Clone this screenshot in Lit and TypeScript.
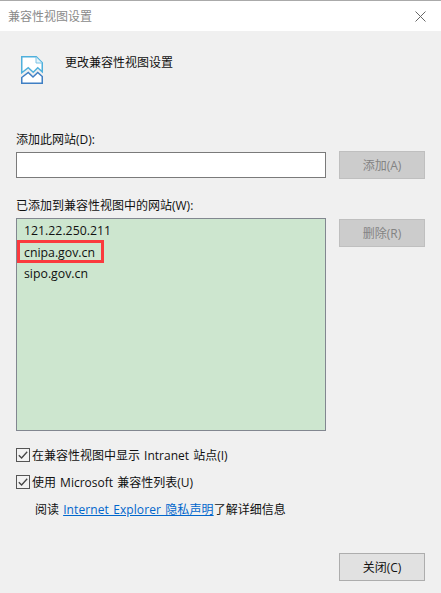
import { LitElement, html, css } from "lit";
import { customElement } from "lit/decorators.js";

const check = html`<svg class="cb" width="14" height="14" viewBox="0 0 14 14"><rect x=".5" y=".5" width="13" height="13" fill="#fff" fill-opacity=".15" stroke="#555"/><path d="M2.8 7.2 5.6 10l5.6-6.2" fill="none" stroke="#444" stroke-width="1.3"/></svg>`;

@customElement("app-root")
export class AppRoot extends LitElement {
  static styles = css`
    :host { display: block; width: 441px; height: 593px; background: #f0f0f0; color: #111;
      font: 12px "Open Sans", "Noto Sans CJK SC", sans-serif; overflow: hidden; }
    .title { height: 30px; background: #fff; border-top: 1px solid #aaa; display: flex; align-items: center; justify-content: space-between; padding: 0 15px 0 8px; color: #8a8a8a; }
    .title svg { display: block; }
    .head { display: flex; align-items: flex-start; gap: 22px; height: 53px; padding: 25px 0 0 21px; box-sizing: content-box; }
    .head span { margin-top: -2px; line-height: 18px; }
    .head svg { flex: none; }
    .body { padding: 0 16px; display: grid; grid-template-columns: 310px 86px; column-gap: 13px; }
    .label { grid-column: 1 / 3; height: 18px; line-height: 18px; }
    .l1 { margin-top: 22px; margin-bottom: 2px; }
    .l2 { margin-top: 18px; margin-bottom: 3px; }
    .input { height: 26px; box-sizing: border-box; background: #fff; border: 1px solid #7a7a7a; margin-top: 1px; }
    .btn { height: 28px; box-sizing: border-box; display: flex; align-items: center; justify-content: center; }
    .off { background: #ccc; border: 1px solid #bfbfbf; color: #838383; }
    .on { background: #e1e1e1; border: 1px solid #adadad; color: #111; }
    .list { position: relative; height: 213px; box-sizing: border-box; background: #cde6cf; border: 1px solid #828790; padding: 0 0 0 7px; }
    .list div { height: 21.5px; line-height: 21.5px; font-size: 12.3px; }
    .list div:first-child { margin-top: 1px; }
    .del { margin-top: 1px; }
    .mark { position: absolute; left: 0; top: 21px; width: 87px; height: 23px; box-sizing: border-box; border: 3px solid #fb3a3e; }
    .checks { padding: 0 16px; margin-top: 15px; word-spacing: 1px; }
    .row { display: flex; align-items: center; gap: 2px; height: 18px; margin-bottom: 9px; }
    .cb { flex: none; }
    .info { padding-left: 19px; height: 18px; line-height: 18px; margin-top: 10px; }
    a { color: #0066cc; text-decoration: underline; letter-spacing: .1px; }
    .foot { padding: 0 16px; display: flex; justify-content: flex-end; margin-top: 34px; }
    .foot .btn { width: 86px; }
  `;
  render() {
    return html`
      <div class="title"><span>兼容性视图设置</span>
        <svg width="11" height="11" viewBox="0 0 11 11"><path d="M.5.5l10 10M10.5.5l-10 10" stroke="#666" fill="none"/></svg></div>
      <div class="head">
        <svg width="22" height="28" viewBox="0 0 22 28">
          <path d="M.75.75h14.5l6 6v9l-4.5-4-4.5 4.5-5-4.5-6.5 5z" fill="#fff" stroke="#4fb0dc" stroke-width="1.5"/>
          <path d="M15 1v6h6" fill="#e4f3fa" stroke="#7cc4e6"/>
          <path d="M.75 21.5l6.5-5 4.75 4.5 4.75-4.5 4.5 4v6.75H.75z" fill="#fff" stroke="#3f7fc4" stroke-width="1.5"/>
        </svg>
        <span>更改兼容性视图设置</span>
      </div>
      <div class="body">
        <div class="label l1">添加此网站(D):</div>
        <div class="input"></div>
        <div class="btn off">添加(A)</div>
        <div class="label l2">已添加到兼容性视图中的网站(W):</div>
        <div class="list">
          <div>121.22.250.211</div><div>cnipa.gov.cn</div><div>sipo.gov.cn</div>
          <span class="mark"></span>
        </div>
        <div class="btn off del">删除(R)</div>
      </div>
      <div class="checks">
        <div class="row">${check}<span>在兼容性视图中显示 Intranet 站点(I)</span></div>
        <div class="row">${check}<span>使用 Microsoft 兼容性列表(U)</span></div>
        <div class="info">阅读 <a href="#">Internet Explorer 隐私声明</a>了解详细信息</div>
      </div>
      <div class="foot"><div class="btn on">关闭(C)</div></div>
    `;
  }
}
